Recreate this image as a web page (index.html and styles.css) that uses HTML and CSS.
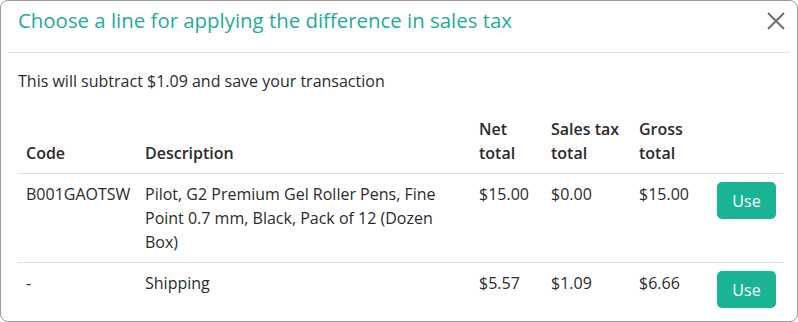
FILE: index.html
```html
<!DOCTYPE html>
<html lang="en">
<head>
	<meta charset="UTF-8">
	<title>Sales tax difference</title>
	<link rel="stylesheet" href="styles.css">
</head>
<body>
	<div class="modal">
		<div class="modal-header">
			<h2 class="modal-title">Choose a line for applying the difference in sales tax</h2>
			<span class="close-btn">
				<svg width="18" height="18" viewBox="0 0 18 18"><path d="M1 1L17 17M17 1L1 17" stroke="#6b6b6b" stroke-width="1.8" fill="none"/></svg>
			</span>
		</div>
		<div class="modal-body">
			<p class="intro">This will subtract $1.09 and save your transaction</p>
			<table class="lines">
				<colgroup>
					<col style="width:119px">
					<col style="width:334px">
					<col style="width:72px">
					<col style="width:88px">
					<col style="width:78px">
					<col>
				</colgroup>
				<thead>
					<tr>
						<th>Code</th>
						<th>Description</th>
						<th>Net<br>total</th>
						<th>Sales tax<br>total</th>
						<th>Gross<br>total</th>
						<th></th>
					</tr>
				</thead>
				<tbody>
					<tr>
						<td>B001GAOTSW</td>
						<td>Pilot, G2 Premium Gel Roller Pens, Fine Point 0.7 mm, Black, Pack of 12 (Dozen Box)</td>
						<td>$15.00</td>
						<td>$0.00</td>
						<td>$15.00</td>
						<td><button class="use-btn">Use</button></td>
					</tr>
					<tr class="last">
						<td>-</td>
						<td>Shipping</td>
						<td>$5.57</td>
						<td>$1.09</td>
						<td>$6.66</td>
						<td><button class="use-btn">Use</button></td>
					</tr>
				</tbody>
			</table>
		</div>
	</div>
</body>
</html>
```

FILE: styles.css
```css
*{
	margin: 0;
	padding: 0;
	box-sizing: border-box;
}
body{
	font-family: "Open Sans", "Noto Sans", sans-serif;
	color: #2b2b2b;
	background: #fff;
}
.modal{
	width: 798px;
	height: 322px;
	border: 1px solid #9a9a9a;
	border-radius: 8px;
	overflow: hidden;
}
.modal-header{
	display: flex;
	align-items: center;
	justify-content: space-between;
	margin: 0 7px;
	height: 52px;
	padding: 0 5px 13px 10px;
	border-bottom: 1px solid #e2e2e2;
}
.modal-title{
	font-size: 20.4px;
	font-weight: 400;
	color: #1fab9a;
	line-height: 24px;
}
.close-btn{
	display: flex;
	margin-top: 2px;
}
.modal-body{
	padding: 16px 13px 0 17px;
	font-size: 16px;
}
.intro{
	line-height: 24px;
	margin-bottom: 16px;
}
.lines{
	width: 100%;
	table-layout: fixed;
	border-collapse: collapse;
}
.lines th,.lines td{
	text-align: left;
	vertical-align: top;
	padding: 8px 8px;
	line-height: 24px;
}
.lines th{
	font-weight: 600;
	vertical-align: bottom;
	border-bottom: 1px solid #dedede;
}
.lines td{
	border-bottom: 1px solid #dedede;
}
.lines tr.last td{
	border-bottom: none;
}
.use-btn{
	display: block;
	width: 59px;
	height: 37px;
	border: none;
	border-radius: 5px;
	background: #1ab394;
	color: #fff;
	font-family: inherit;
	font-size: 16px;
	cursor: pointer;
}
```
